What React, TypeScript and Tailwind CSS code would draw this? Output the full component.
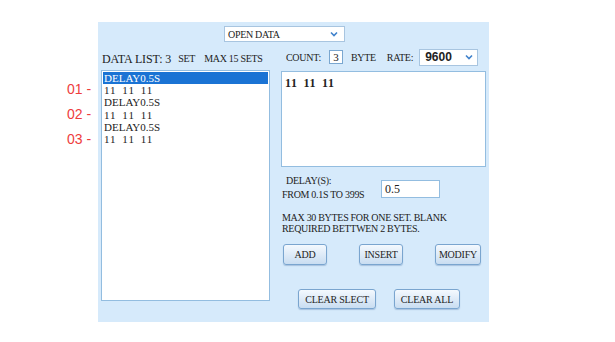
const Chevron = () => (
  <svg width="8" height="6" viewBox="0 0 8 6" className="shrink-0">
    <polyline points="1,1.5 4,4.5 7,1.5" fill="none" stroke="#3f82cc" strokeWidth="1.6" />
  </svg>
);

const Btn = ({ label, w }: { label: string; w: string }) => (
  <button
    className={`${w} h-full rounded-[3px] border border-[#7aa5cf] bg-gradient-to-b from-[#f4f9fe] to-[#c9ddf1] text-[10px] tracking-[-0.2px] text-[#1e1e1e] shadow-[0_1px_1px_rgba(80,120,170,0.35)]`}
  >
    {label}
  </button>
);

const App = () => {
  const rows = ["DELAY0.5S", "11 11 11", "DELAY0.5S", "11 11 11", "DELAY0.5S", "11 11 11"];
  const marks = ["01 -", "02 -", "03 -"];

  return (
    <div className="h-[342px] w-[615px] bg-white font-['Liberation_Serif',serif] text-[#222]">
      <div className="flex pl-[62px] pt-[22px]">
        {/* red annotations */}
        <div className="flex w-[36px] flex-col pl-[5px] pt-[54.5px] font-['Liberation_Sans',sans-serif] text-[14px] text-[#ee3d3d]">
          {marks.map((m) => (
            <div key={m} className="h-[25px] leading-[25px] whitespace-pre">
              {m}
            </div>
          ))}
        </div>

        <div className="flex h-[300px] w-[391px] flex-col bg-[#d6eafb]">
          <div className="flex pl-[126px] pt-[4px]">
            <div className="flex h-[16px] w-[121px] items-center justify-between border border-[#a8c5e0] bg-white pl-[3px] pr-[6px] text-[10px] tracking-[-0.3px]">
              <span>OPEN DATA</span>
              <Chevron />
            </div>
          </div>

          <div className="mt-[6px] flex">
            {/* left column */}
            <div className="ml-[3px] flex w-[169px] flex-col">
              <div className="flex h-[20px] items-center pl-[1px] pt-[1px] whitespace-nowrap">
                <span className="text-[12px] tracking-[-0.1px]">DATA LIST: 3</span>
                <span className="ml-[7px] text-[10px] tracking-[-0.3px]">SET</span>
                <span className="ml-[9px] text-[10px] tracking-[-0.3px]">MAX 15 SETS</span>
              </div>
              <div className="mt-[2px] h-[231px] border border-[#93bde0] bg-white p-px text-[11px] leading-[12.2px]">
                {rows.map((r, i) => (
                  <div
                    key={i}
                    className={`pl-[1px] ${i % 2 === 1 ? "tracking-[1px] [word-spacing:2px]" : ""} ${i === 0 ? "bg-[#1a73d4] text-white" : ""}`}
                  >
                    {r}
                  </div>
                ))}
              </div>
            </div>

            {/* right column */}
            <div className="ml-[11px] flex w-[205px] flex-col">
              <div className="flex h-[18px] items-center pl-[5px] text-[10px] tracking-[-0.3px]">
                <span>COUNT:</span>
                <div className="ml-[8px] flex h-[14px] w-[14px] items-center justify-center border border-[#7aa7d0] bg-white text-[11px]">
                  3
                </div>
                <span className="ml-[8px]">BYTE</span>
                <span className="ml-[11px]">RATE:</span>
                <div className="ml-[6px] flex h-[17px] w-[59px] items-center justify-between border border-[#a8c5e0] bg-white pl-[5px] pr-[4px] font-['Liberation_Sans',sans-serif] text-[12px] font-bold tracking-normal">
                  <span>9600</span>
                  <Chevron />
                </div>
              </div>

              <div className="mt-[5px] h-[96px] border border-[#93bde0] bg-white px-[3px] pt-[2px] text-[12px] font-bold tracking-[0.7px] [word-spacing:2px]">
                11 11 11
              </div>

              <div className="mt-[7px] flex text-[10px] tracking-[-0.3px]">
                <div className="flex w-[100px] flex-col leading-[14px]">
                  <span className="pl-[5px]">DELAY(S):</span>
                  <span className="pl-[1px] whitespace-nowrap">FROM 0.1S TO 399S</span>
                </div>
                <div className="mt-[6px] flex h-[18px] w-[59px] items-center border border-[#93bde0] bg-white pl-[3px] text-[12px] tracking-normal">
                  0.5
                </div>
              </div>

              <div className="mt-[10px] pl-[1px] text-[10px] leading-[11px] tracking-[-0.3px] whitespace-nowrap">
                <div>MAX 30 BYTES FOR ONE SET. BLANK</div>
                <div>REQUIRED BETTWEN 2 BYTES.</div>
              </div>

              <div className="mt-[10px] flex h-[21px] gap-[32px] pl-[2px]">
                <Btn label="ADD" w="w-[44px]" />
                <Btn label="INSERT" w="w-[44px]" />
                <Btn label="MODIFY" w="w-[46px]" />
              </div>

              <div className="mt-[24px] flex h-[20px] gap-[18px] pl-[17px]">
                <Btn label="CLEAR SLECT" w="w-[78px]" />
                <Btn label="CLEAR ALL" w="w-[66px]" />
              </div>
            </div>
          </div>
        </div>
      </div>
    </div>
  );
};

export default App;
